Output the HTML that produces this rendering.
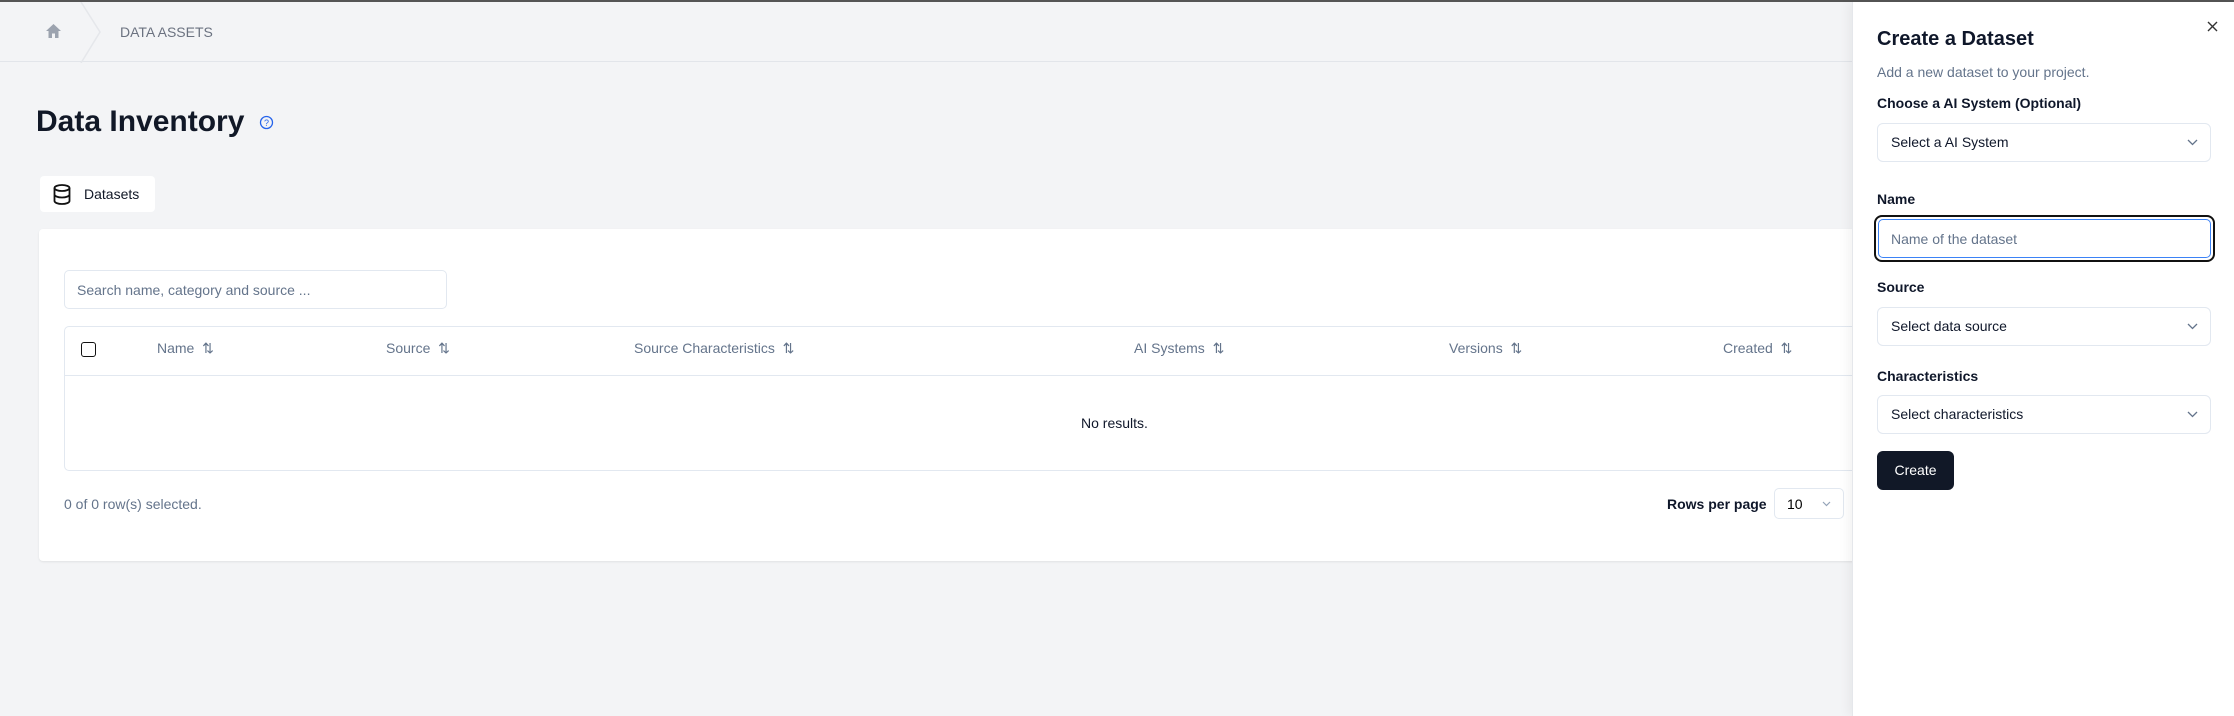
<!DOCTYPE html>
<html><head><style>
*{box-sizing:border-box;margin:0;padding:0}
body{width:2234px;height:714px;background:#f3f4f6;font-family:"Liberation Sans",sans-serif;position:relative;overflow:hidden;border-top:2px solid #555}
.a{position:absolute}
.hdr{left:0;top:0;width:1852px;height:60px;border-bottom:1px solid #e2e5ea}
.th{position:absolute;top:338px;font-size:14px;color:#64748b}
.sel{position:absolute;left:1877px;width:334px;height:39px;border:1px solid #e2e8f0;border-radius:6px;background:#fff;font-size:14px;color:#0f172a;padding-left:13px;line-height:37px}
.sel svg{position:absolute;right:12px;top:15px}
.lbl{position:absolute;left:1877px;font-size:14px;font-weight:700;color:#0f172a}
</style></head><body>
<div class="a hdr"></div>
<svg class="a" style="left:45px;top:21px" width="17" height="16" viewBox="0 0 17 16"><path d="M8.5 1 L16 8 H13.5 V15 H10 V10.5 H7 V15 H3.5 V8 H1 Z" fill="#9ca3af"/></svg>
<svg class="a" style="left:80px;top:0" width="22" height="61"><path d="M1 0 L20 30 L1 61" fill="none" stroke="#e5e7eb" stroke-width="1.5"/></svg>
<div class="a" style="left:120px;top:22px;font-size:14px;color:#6b7280">DATA ASSETS</div>
<div class="a" style="left:36px;top:103px;font-size:30px;font-weight:700;color:#111827">Data Inventory</div>
<svg class="a" style="left:259px;top:113px" width="15" height="15"><circle cx="7.5" cy="7.5" r="6" fill="none" stroke="#2563eb" stroke-width="1.3"/><text x="7.5" y="11" font-size="9" text-anchor="middle" fill="#2563eb" font-family="Liberation Sans">?</text></svg>
<div class="a" style="left:40px;top:174px;width:115px;height:36px;background:#fff;border-radius:4px"></div>
<svg class="a" style="left:53px;top:182px" width="18" height="21" viewBox="0 0 18 21"><g fill="none" stroke="#111" stroke-width="1.8"><ellipse cx="9" cy="4" rx="7.5" ry="3"/><path d="M1.5 4v13c0 1.7 3.4 3 7.5 3s7.5-1.3 7.5-3V4M1.5 10.5c0 1.7 3.4 3 7.5 3s7.5-1.3 7.5-3"/></g></svg>
<div class="a" style="left:84px;top:184px;font-size:14px;color:#111827">Datasets</div>
<div class="a" style="left:39px;top:227px;width:1819px;height:332px;background:#fff;border-radius:4px;box-shadow:0 1px 2px rgba(0,0,0,.08)"></div>
<div class="a" style="left:64px;top:268px;width:383px;height:39px;border:1px solid #e2e8f0;border-radius:5px;font-size:14px;color:#64748b;padding:11px 0 0 12px">Search name, category and source ...</div>
<div class="a" style="left:64px;top:324px;width:1800px;height:145px;border:1px solid #e2e8f0;border-radius:5px"></div>
<div class="a" style="left:64px;top:373px;width:1800px;height:1px;background:#e2e8f0"></div>
<div class="a" style="left:81px;top:340px;width:15px;height:15px;border:1.3px solid #111;border-radius:3px"></div>
<div class="th" style="left:157px">Name &nbsp;⇅</div>
<div class="th" style="left:386px">Source &nbsp;⇅</div>
<div class="th" style="left:634px">Source Characteristics &nbsp;⇅</div>
<div class="th" style="left:1134px">AI Systems &nbsp;⇅</div>
<div class="th" style="left:1449px">Versions &nbsp;⇅</div>
<div class="th" style="left:1723px">Created &nbsp;⇅</div>
<div class="a" style="left:1081px;top:413px;font-size:14px;color:#0f172a">No results.</div>
<div class="a" style="left:64px;top:494px;font-size:14px;color:#64748b">0 of 0 row(s) selected.</div>
<div class="a" style="left:1667px;top:494px;font-size:14px;font-weight:700;color:#0f172a">Rows per page</div>
<div class="a" style="left:1774px;top:486px;width:70px;height:31px;border:1px solid #e2e8f0;border-radius:5px;font-size:14px;padding:7px 0 0 12px">10<svg style="position:absolute;right:12px;top:12px" width="9" height="6"><path d="M1 1l3.5 3.5L8 1" fill="none" stroke="#94a3b8" stroke-width="1.2"/></svg></div>
<div class="a" style="left:1852px;top:0;width:382px;height:714px;background:#fff;border-left:1px solid #e5e7eb;box-shadow:-4px 0 10px rgba(0,0,0,.05)"></div>
<svg class="a" style="left:2207px;top:19px" width="11" height="11"><path d="M1 1l9 9M10 1l-9 9" stroke="#333" stroke-width="1.4"/></svg>
<div class="a" style="left:1877px;top:26px;font-size:20px;font-weight:700;color:#0f172a">Create a Dataset</div>
<div class="a" style="left:1877px;top:62px;font-size:14px;color:#64748b">Add a new dataset to your project.</div>
<div class="lbl" style="top:93px">Choose a AI System (Optional)</div>
<div class="sel" style="top:121px">Select a AI System<svg width="11" height="7"><path d="M1 1l4.5 4.5L10 1" fill="none" stroke="#64748b" stroke-width="1.3"/></svg></div>
<div class="lbl" style="top:189px">Name</div>
<div class="a" style="left:1874px;top:213px;width:341px;height:47px;border:2.5px solid #111;border-radius:8px"></div>
<div class="a" style="left:1878px;top:217px;width:333px;height:39px;border:1.3px solid #3b82f6;border-radius:5px;font-size:14px;color:#64748b;padding:11px 0 0 12px">Name of the dataset</div>
<div class="lbl" style="top:277px">Source</div>
<div class="sel" style="top:305px">Select data source<svg width="11" height="7"><path d="M1 1l4.5 4.5L10 1" fill="none" stroke="#64748b" stroke-width="1.3"/></svg></div>
<div class="lbl" style="top:366px">Characteristics</div>
<div class="sel" style="top:393px">Select characteristics<svg width="11" height="7"><path d="M1 1l4.5 4.5L10 1" fill="none" stroke="#64748b" stroke-width="1.3"/></svg></div>
<div class="a" style="left:1877px;top:449px;width:77px;height:39px;background:#111827;border-radius:6px;color:#fff;font-size:14px;text-align:center;line-height:39px">Create</div>
</body></html>
